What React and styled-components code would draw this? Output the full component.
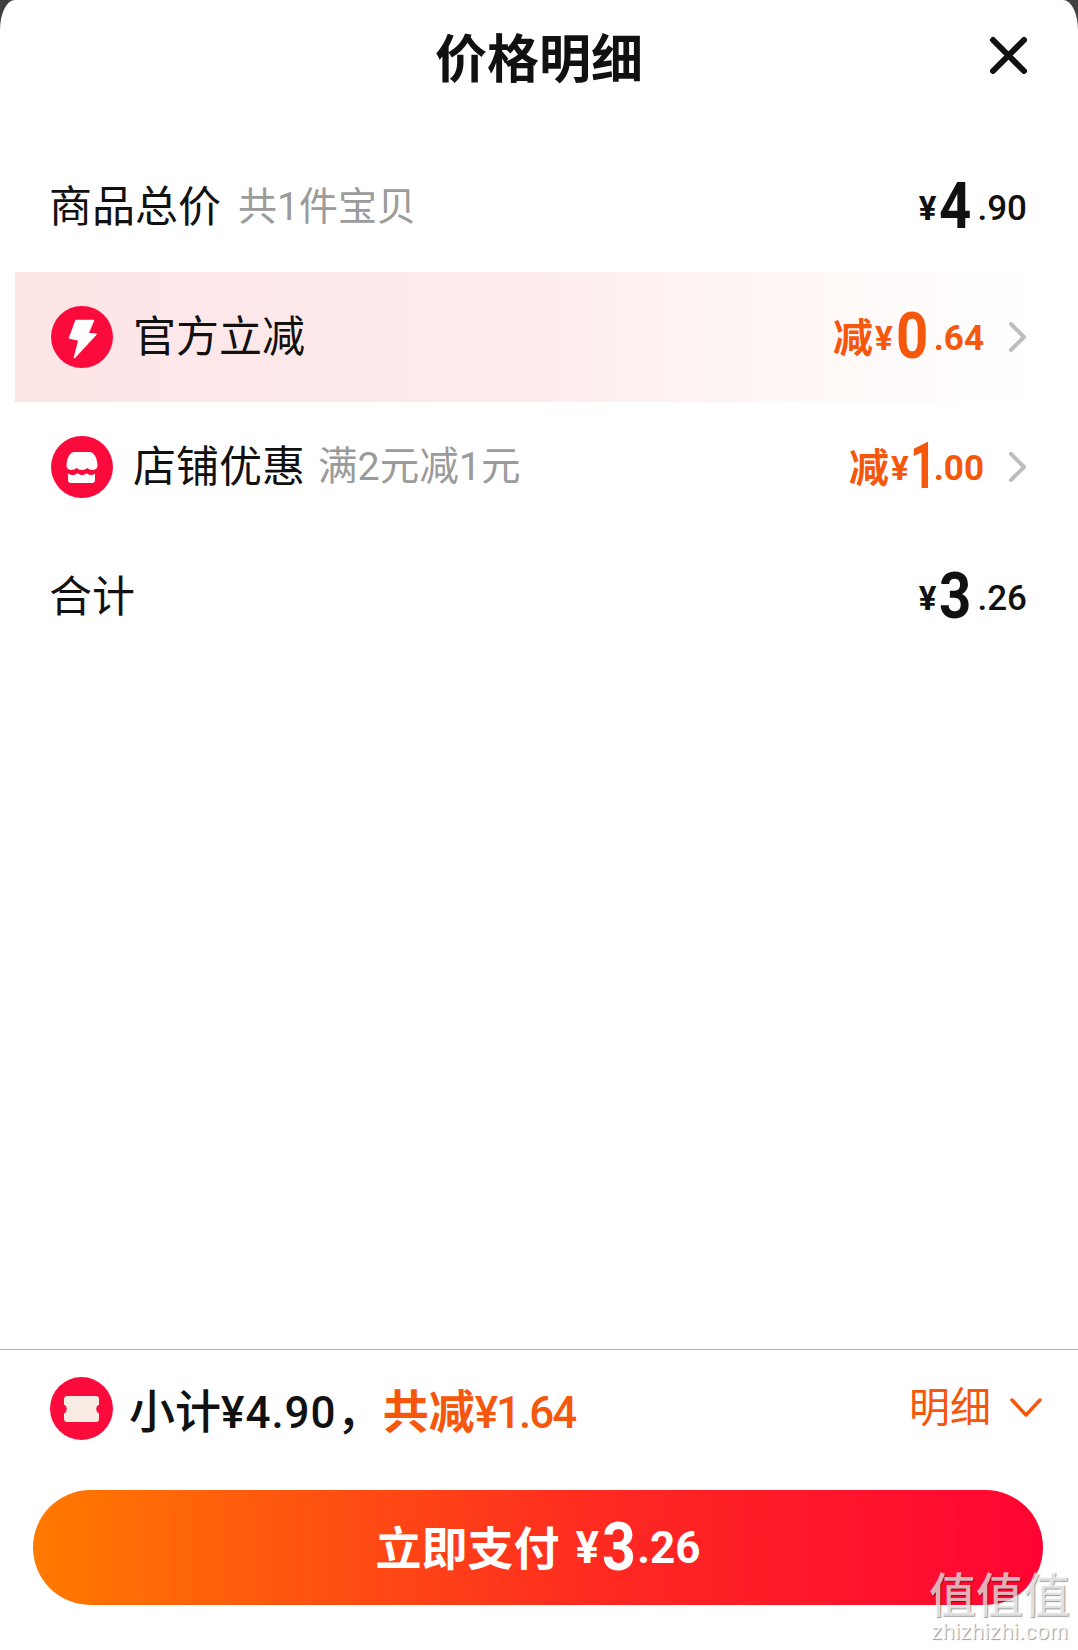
import styled, { createGlobalStyle } from 'styled-components';

const GlobalStyle = createGlobalStyle`
  html, body {
    margin: 0;
    padding: 0;
    background: #404040;
  }
  * {
    box-sizing: border-box;
  }
`;

const CJK = `"Noto Sans CJK SC", sans-serif`;
const NUM = `"Roboto", "Noto Sans CJK SC", sans-serif`;

const Sheet = styled.div`
  position: relative;
  display: flex;
  flex-direction: column;
  width: 1078px;
  height: 1650px;
  overflow: hidden;
  background: #fff;
  border-radius: 15px 15px 0 0 / 30px 30px 0 0;
  font-family: "Roboto", ${CJK};
  color: #111;
`;

const Header = styled.div`
  display: grid;
  grid-template-columns: 1fr auto 1fr;
  height: 116px;
  padding: 3px 50px 0;
  margin-bottom: 26px;
`;

const Title = styled.h1`
  grid-column: 2;
  margin: 0;
  font-size: 52px;
  font-weight: 700;
  line-height: 116px;
`;

const CloseButton = styled.button`
  justify-self: end;
  align-self: start;
  display: flex;
  margin: 33px 1px 0 0;
  padding: 0;
  border: none;
  background: none;
  cursor: pointer;
`;

const Row = styled.div`
  display: flex;
  align-items: center;
  height: 130px;
  margin: 0 38px 0 15px;
  padding: 0 13px 0 34px;
  background: ${p => (p.$hot ? 'linear-gradient(90deg, #fde5e6 0%, #fdebec 50%, #fff8f7 78%, #fff 100%)' : 'transparent')};
`;

const Label = styled.span`
  font-size: 43px;
  line-height: 1;
  color: #111;
`;

const Note = styled.span`
  margin-left: ${p => p.$gap}px;
  font-size: ${p => p.$size}px;
  line-height: 1;
  color: #9b9b9b;
`;

const IconWrap = styled.span`
  display: flex;
  flex: none;
  margin: 0 20px 0 2px;
`;

const Money = styled.span`
  display: flex;
  align-items: center;
  margin-left: auto;
  font-family: ${NUM};
  line-height: 1;
  color: ${p => (p.$orange ? '#f5570c' : '#111')};
`;

const Prefix = styled.span`
  margin: 0 2px 4px 0;
  font-family: ${CJK};
  font-size: 40px;
  font-weight: 700;
`;

const Yen = styled.span`
  margin: ${p => (p.$large ? '0 3px 0 0' : '3px 3px 0 0')};
  font-size: ${p => (p.$large ? 44 : 33)}px;
  font-weight: 700;
`;

/* the big digit is a condensed face in the app, Roboto squeezed to fit */
const Whole = styled.span`
  display: inline-block;
  width: ${p => (p.$one ? 26 : 32)}px;
  margin: ${p => (p.$one ? '0 -6px 0 -4px' : '0')};
  font-size: ${p => (p.$large ? 67 : 64)}px;
  font-weight: 700;
  transform: ${p => (p.$one ? 'translateX(2px) scaleX(0.72)' : 'scaleX(0.88)')};
  transform-origin: 0 50%;
`;

const Fraction = styled.span`
  margin: ${p => (p.$large ? '0 0 0 3px' : '3px 0 0 6px')};
  font-size: ${p => (p.$large ? 44 : 35)}px;
  font-weight: ${p => (p.$bold ? 700 : 500)};
`;

const Chevron = styled.svg`
  flex: none;
  margin-left: 25px;
`;

const Footer = styled.div`
  margin-top: auto;
  border-top: 1px solid #adadad;
  padding-bottom: 45px;
`;

const Summary = styled.div`
  display: flex;
  align-items: center;
  height: 116px;
  margin-bottom: 24px;
  padding: 0 36px 0 50px;
`;

const SummaryIcon = styled.span`
  display: flex;
  flex: none;
  margin-right: 16px;
`;

const SummaryText = styled.span`
  margin-top: 3px;
  font-family: ${CJK};
  font-size: 46px;
  font-weight: ${p => (p.$orange ? 700 : 500)};
  line-height: 1;
  color: ${p => (p.$orange ? '#f5570c' : '#111')};
`;

const SummaryNum = styled.span`
  font-family: "Roboto", sans-serif;
  font-weight: 500;
  font-size: 44px;
  letter-spacing: ${p => (p.$tight ? -2 : 1)}px;
`;

const Detail = styled.span`
  display: flex;
  align-items: center;
  gap: 19px;
  margin-left: auto;
  font-size: 41px;
  line-height: 1;
  color: #f5570c;
`;

const PayButton = styled.button`
  display: flex;
  align-items: center;
  justify-content: center;
  width: 1010px;
  height: 115px;
  margin-left: 33px;
  padding: 0;
  border: none;
  border-radius: 58px;
  background: linear-gradient(90deg, #ff7a00 0%, #fe2b20 55%, #ff0433 100%);
  color: #fff;
  cursor: pointer;
`;

const PayLabel = styled.span`
  margin: 0 16px 6px 0;
  font-family: ${CJK};
  font-size: 46px;
  font-weight: 700;
  line-height: 1;
`;

const PayMoney = styled.span`
  display: flex;
  align-items: center;
  font-family: ${NUM};
  line-height: 1;
  color: #fff;
`;

const Watermark = styled.div`
  position: absolute;
  right: 8px;
  bottom: 6px;
  display: flex;
  flex-direction: column;
  align-items: center;
  gap: 3px;
  color: rgba(255, 255, 255, 0.7);
  text-shadow: 1px 1px 1px rgba(0, 0, 0, 0.4);
  pointer-events: none;
`;

const MarkTitle = styled.span`
  font-family: ${CJK};
  font-size: 47px;
  font-weight: 500;
  line-height: 50px;
`;

const MarkSite = styled.span`
  font-family: "Liberation Sans", sans-serif;
  font-size: 22px;
  line-height: 24px;
  letter-spacing: 0.4px;
  color: rgba(255, 255, 255, 0.85);
`;

const RED = '#fb0a3c';

const BoltIcon = () => (
  <svg width="62" height="62" viewBox="0 0 62 62">
    <circle cx="31" cy="31" r="31" fill={RED} />
    <path d="M25 14.5h17.5L37 27.5l8 .8L23.5 51.5 28 34l-9.5-2z" fill="#fff" stroke="#fff" strokeWidth="1.5" strokeLinejoin="round" />
  </svg>
);

const StoreIcon = () => (
  <svg width="62" height="62" viewBox="0 0 62 62">
    <circle cx="31" cy="31" r="31" fill={RED} />
    <path d="M23 16h16c4 0 7.5 7 7.5 13.5 0 3-2.500 4.500-5 4.500s-3.500-1-5-2c-1.500 1-3.500 2-5.500 2s-4-1-5.500-2c-1.500 1-3 2-5 2-2.500 0-5-1.500-5-4.500C15.500 23 19 16 23 16z" fill="#fff" />
    <path d="M17 37.500c1.500 1 3 1.500 4.500 1.500 2 0 3.500-.8 5-1.800 1.500 1 3 1.800 4.500 1.800s3-.8 4.500-1.800c1.500 1 3 1.800 4.500 1.800 1.500 0 2.500-.5 4-1.500V44a3 3 0 0 1-3 3H20a3 3 0 0 1-3-3z" fill="#fff" />
  </svg>
);

const TicketIcon = () => (
  <svg width="63" height="63" viewBox="0 0 63 63">
    <circle cx="31.500" cy="31.500" r="31.500" fill={RED} />
    <path d="M17 19h29a3 3 0 0 1 3 3v5.500a5 5 0 0 0 0 9V42a3 3 0 0 1-3 3H17a3 3 0 0 1-3-3v-5.500a5 5 0 0 0 0-9V22a3 3 0 0 1 3-3z" fill="#f8ebe4" />
  </svg>
);

const rowChevron = (
  <Chevron width="18" height="30" viewBox="0 0 18 30">
    <path d="M2 2l13 13L2 28" fill="none" stroke="#bdbdbd" strokeWidth="4" strokeLinecap="round" strokeLinejoin="round" />
  </Chevron>
);

const Price = ({ whole, fraction, orange, prefix }) => (
  <Money $orange={orange}>
    {prefix && <Prefix>{prefix}</Prefix>}
    <Yen>¥</Yen>
    <Whole $one={whole === '1'}>{whole}</Whole>
    <Fraction $bold={orange}>.{fraction}</Fraction>
  </Money>
);

export default function App() {
  return (
    <Sheet>
      <GlobalStyle />
      <Header>
        <Title>价格明细</Title>
        <CloseButton aria-label="关闭">
          <svg width="38" height="38" viewBox="0 0 38 38">
            <path d="M4 4l31 31M35 4L4 35" stroke="#111" strokeWidth="6" strokeLinecap="round" />
          </svg>
        </CloseButton>
      </Header>

      <Row>
        <Label>商品总价</Label>
        <Note $gap={17} $size={39}>共1件宝贝</Note>
        <Price whole="4" fraction="90" />
      </Row>
      <Row $hot>
        <IconWrap><BoltIcon /></IconWrap>
        <Label>官方立减</Label>
        <Price prefix="减" whole="0" fraction="64" orange />
        {rowChevron}
      </Row>
      <Row>
        <IconWrap><StoreIcon /></IconWrap>
        <Label>店铺优惠</Label>
        <Note $gap={13} $size={39.5}>满2元减1元</Note>
        <Price prefix="减" whole="1" fraction="00" orange />
        {rowChevron}
      </Row>
      <Row>
        <Label>合计</Label>
        <Price whole="3" fraction="26" />
      </Row>

      <Footer>
        <Summary>
          <SummaryIcon><TicketIcon /></SummaryIcon>
          <SummaryText>小计<SummaryNum>¥4.90</SummaryNum>，</SummaryText>
          <SummaryText $orange>共减<SummaryNum $tight>¥1.64</SummaryNum></SummaryText>
          <Detail>
            明细
            <svg width="32" height="20" viewBox="0 0 32 20">
              <path d="M2 2l14 15L30 2" fill="none" stroke="#f5570c" strokeWidth="3.500" strokeLinecap="round" strokeLinejoin="round" />
            </svg>
          </Detail>
        </Summary>
        <PayButton>
          <PayLabel>立即支付</PayLabel>
          <PayMoney>
            <Yen $large>¥</Yen>
            <Whole $large>3</Whole>
            <Fraction $large $bold>.26</Fraction>
          </PayMoney>
        </PayButton>
      </Footer>

      <Watermark>
        <MarkTitle>值值值</MarkTitle>
        <MarkSite>zhizhizhi.com</MarkSite>
      </Watermark>
    </Sheet>
  );
}
